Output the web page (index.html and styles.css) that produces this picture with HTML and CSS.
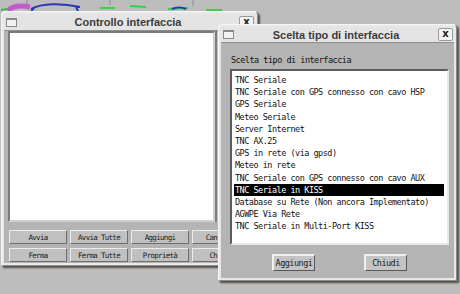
FILE: index.html
```html
<!DOCTYPE html>
<html lang="it">
<head>
    <meta charset="UTF-8" />
    <title>Scelta tipo di interfaccia</title>
    <link rel="stylesheet" href="styles.css">
</head>
<body>
    <div class="desktop">
        <!-- mappa sullo sfondo -->
        <svg class="map" width="460" height="16" viewBox="0 0 460 16">
            <line x1="27" y1="0" x2="27" y2="6" stroke="#8a8aa0" stroke-width="1"/>
            <line x1="110" y1="0" x2="110" y2="5" stroke="#8a8aa0" stroke-width="1"/>
            <line x1="193" y1="0" x2="193" y2="6" stroke="#8a8aa0" stroke-width="1"/>
            <path d="M1 10 L7 9" stroke="#30c040" stroke-width="2" fill="none"/>
            <path d="M8 11 C12 6 20 5 30 7" stroke="#c25ac8" stroke-width="5" fill="none"/>
            <path d="M31 9 C42 3 62 3 80 7 M76 7 L78 11 M34 8 L31 11" stroke="#2838b8" stroke-width="2" fill="none"/>
            <path d="M100 8 L115 8" stroke="#38d048" stroke-width="2" fill="none"/>
            <path d="M130 6 L146 7" stroke="#38d048" stroke-width="2" fill="none"/>
            <path d="M168 9 L188 8" stroke="#38d048" stroke-width="2" fill="none"/>
            <path d="M172 9 C176 7 182 7 186 9" stroke="#2838b8" stroke-width="2" fill="none"/>
            <path d="M206 10 L222 10" stroke="#38d048" stroke-width="2" fill="none"/>
        </svg>

        <div class="window win-control">
            <div class="titlebar">
                <span class="menu-btn"></span>
                <span class="title">Controllo interfaccia</span>
                <span class="close-btn">x</span>
            </div>
            <div class="body">
                <div class="output-row">
                    <div class="output"></div>
                    <div class="scrollbar"></div>
                </div>
                <div class="btn-grid">
                    <span class="btn">Avvia</span>
                    <span class="btn">Avvia Tutte</span>
                    <span class="btn">Aggiungi</span>
                    <span class="btn">Cancella</span>
                    <span class="btn">Ferma</span>
                    <span class="btn">Ferma Tutte</span>
                    <span class="btn">Proprietà</span>
                    <span class="btn">Chiudi</span>
                </div>
            </div>
        </div>

        <div class="window win-choose">
            <div class="titlebar">
                <span class="menu-btn"></span>
                <span class="title">Scelta tipo di interfaccia</span>
                <span class="close-btn">x</span>
            </div>
            <div class="body">
                <div class="label">Scelta tipo di interfaccia</div>
                <div class="listbox">
                    <div class="item">TNC Seriale</div>
                    <div class="item">TNC Seriale con GPS connesso con cavo HSP</div>
                    <div class="item">GPS Seriale</div>
                    <div class="item">Meteo Seriale</div>
                    <div class="item">Server Internet</div>
                    <div class="item">TNC AX.25</div>
                    <div class="item">GPS in rete (via gpsd)</div>
                    <div class="item">Meteo in rete</div>
                    <div class="item">TNC Seriale con GPS connesso con cavo AUX</div>
                    <div class="item selected">TNC Seriale in KISS</div>
                    <div class="item">Database su Rete (Non ancora Implementato)</div>
                    <div class="item">AGWPE Via Rete</div>
                    <div class="item">TNC Seriale in Multi-Port KISS</div>
                </div>
                <div class="actions">
                    <span class="btn big">Aggiungi</span>
                    <span class="btn big">Chiudi</span>
                </div>
            </div>
        </div>
    </div>
</body>
</html>
```

FILE: styles.css
```css
body {
    margin: 0;
    padding: 0;
    background: #bdbdbd;
}

.desktop {
    position: relative;
    width: 460px;
    height: 294px;
    overflow: hidden;
    background: #bdbdbd;
    font-family: "DejaVu Sans Mono", "Liberation Mono", monospace;
}

.map {
    position: absolute;
    top: 0;
    left: 0;
}

/* finestre sul desktop */
.window {
    position: absolute;
    box-sizing: border-box;
    display: flex;
    flex-direction: column;
    padding: 2px;
    background: #e8e8e8;
    border: 1px solid #f6f6f6;
    border-right-color: #8c8c8c;
    border-bottom-color: #8c8c8c;
    border-radius: 4px 4px 0 0;
    box-shadow: 2px 2px 2px rgba(40, 30, 20, 0.7);
}

.win-control {
    left: 1px;
    top: 11px;
    width: 257px;
    height: 255px;
}

.win-choose {
    left: 218px;
    top: 24px;
    width: 239px;
    height: 257px;
}

.titlebar {
    display: flex;
    align-items: center;
    height: 17px;
    padding: 0 1px 0 2px;
    background: #e4e4e4;
}

.title {
    flex: 1;
    text-align: center;
    font-family: "Liberation Sans", Arial, sans-serif;
    font-weight: bold;
    font-size: 11px;
    color: #3c3c3c;
}

.menu-btn {
    width: 9px;
    height: 6px;
    border: 1px solid #8a8a8a;
    border-top-width: 2px;
    background: #f2f2f2;
}

.close-btn {
    box-sizing: border-box;
    width: 15px;
    height: 13px;
    line-height: 10px;
    text-align: center;
    font-family: "DejaVu Sans", sans-serif;
    font-weight: bold;
    font-size: 10px;
    color: #222;
    background: #f4f4f4;
    border: 1px solid #9a9a9a;
    border-radius: 2px;
}

.body {
    flex: 1;
    display: flex;
    flex-direction: column;
    background: #b4b4b4;
    border-top: 1px solid #8e8e8e;
}

/* finestra di controllo */
.win-control .body {
    padding: 0 4px 1px 4px;
}

.output-row {
    display: flex;
    height: 191px;
}

.output {
    flex: 1;
    background: #fff;
    border: 2px solid #7a7a7a;
    border-right-color: #d0d0d0;
    border-bottom-color: #d0d0d0;
}

.scrollbar {
    width: 34px;
    background: #c4c4c4;
    border-left: 2px solid #7c7c7c;
}

.btn-grid {
    display: grid;
    grid-template-columns: repeat(4, 58px);
    grid-auto-rows: 14px;
    column-gap: 3px;
    row-gap: 4px;
    margin-top: 8px;
    margin-left: 1px;
}

.btn {
    box-sizing: border-box;
    display: flex;
    align-items: center;
    justify-content: center;
    background: #c0c0c0;
    border: 1px solid #ececec;
    border-right-color: #6e6e6e;
    border-bottom-color: #6e6e6e;
    font-size: 7.5px;
    letter-spacing: -0.7px;
    color: #202020;
    white-space: nowrap;
    overflow: hidden;
}

/* finestra di scelta */
.win-choose .body {
    padding: 11px 5px 7px 9px;
}

.label {
    height: 12px;
    line-height: 12px;
    margin-left: 1px;
    font-size: 8.5px;
    letter-spacing: -0.5px;
    color: #111;
}

.listbox {
    box-sizing: border-box;
    height: 176px;
    margin-top: 3px;
    padding: 3px 3px 0 2px;
    background: #fff;
    border: 2px solid #5c5c5c;
    border-right-color: #e8e8e8;
    border-bottom-color: #e8e8e8;
}

.item {
    height: 12.2px;
    line-height: 12.2px;
    padding-left: 1px;
    font-size: 8.5px;
    letter-spacing: -0.5px;
    color: #111;
    white-space: nowrap;
}

.item.selected {
    background: #000;
    color: #fff;
}

.actions {
    display: flex;
    justify-content: center;
    gap: 49px;
    margin-top: 9px;
}

.btn.big {
    width: 43px;
    height: 17px;
    font-size: 8.5px;
    letter-spacing: -0.5px;
    background: #c4c4c4;
    border-width: 2px 1px 1px 2px;
    border-color: #f0f0f0 #5a5a5a #5a5a5a #f0f0f0;
}
```
